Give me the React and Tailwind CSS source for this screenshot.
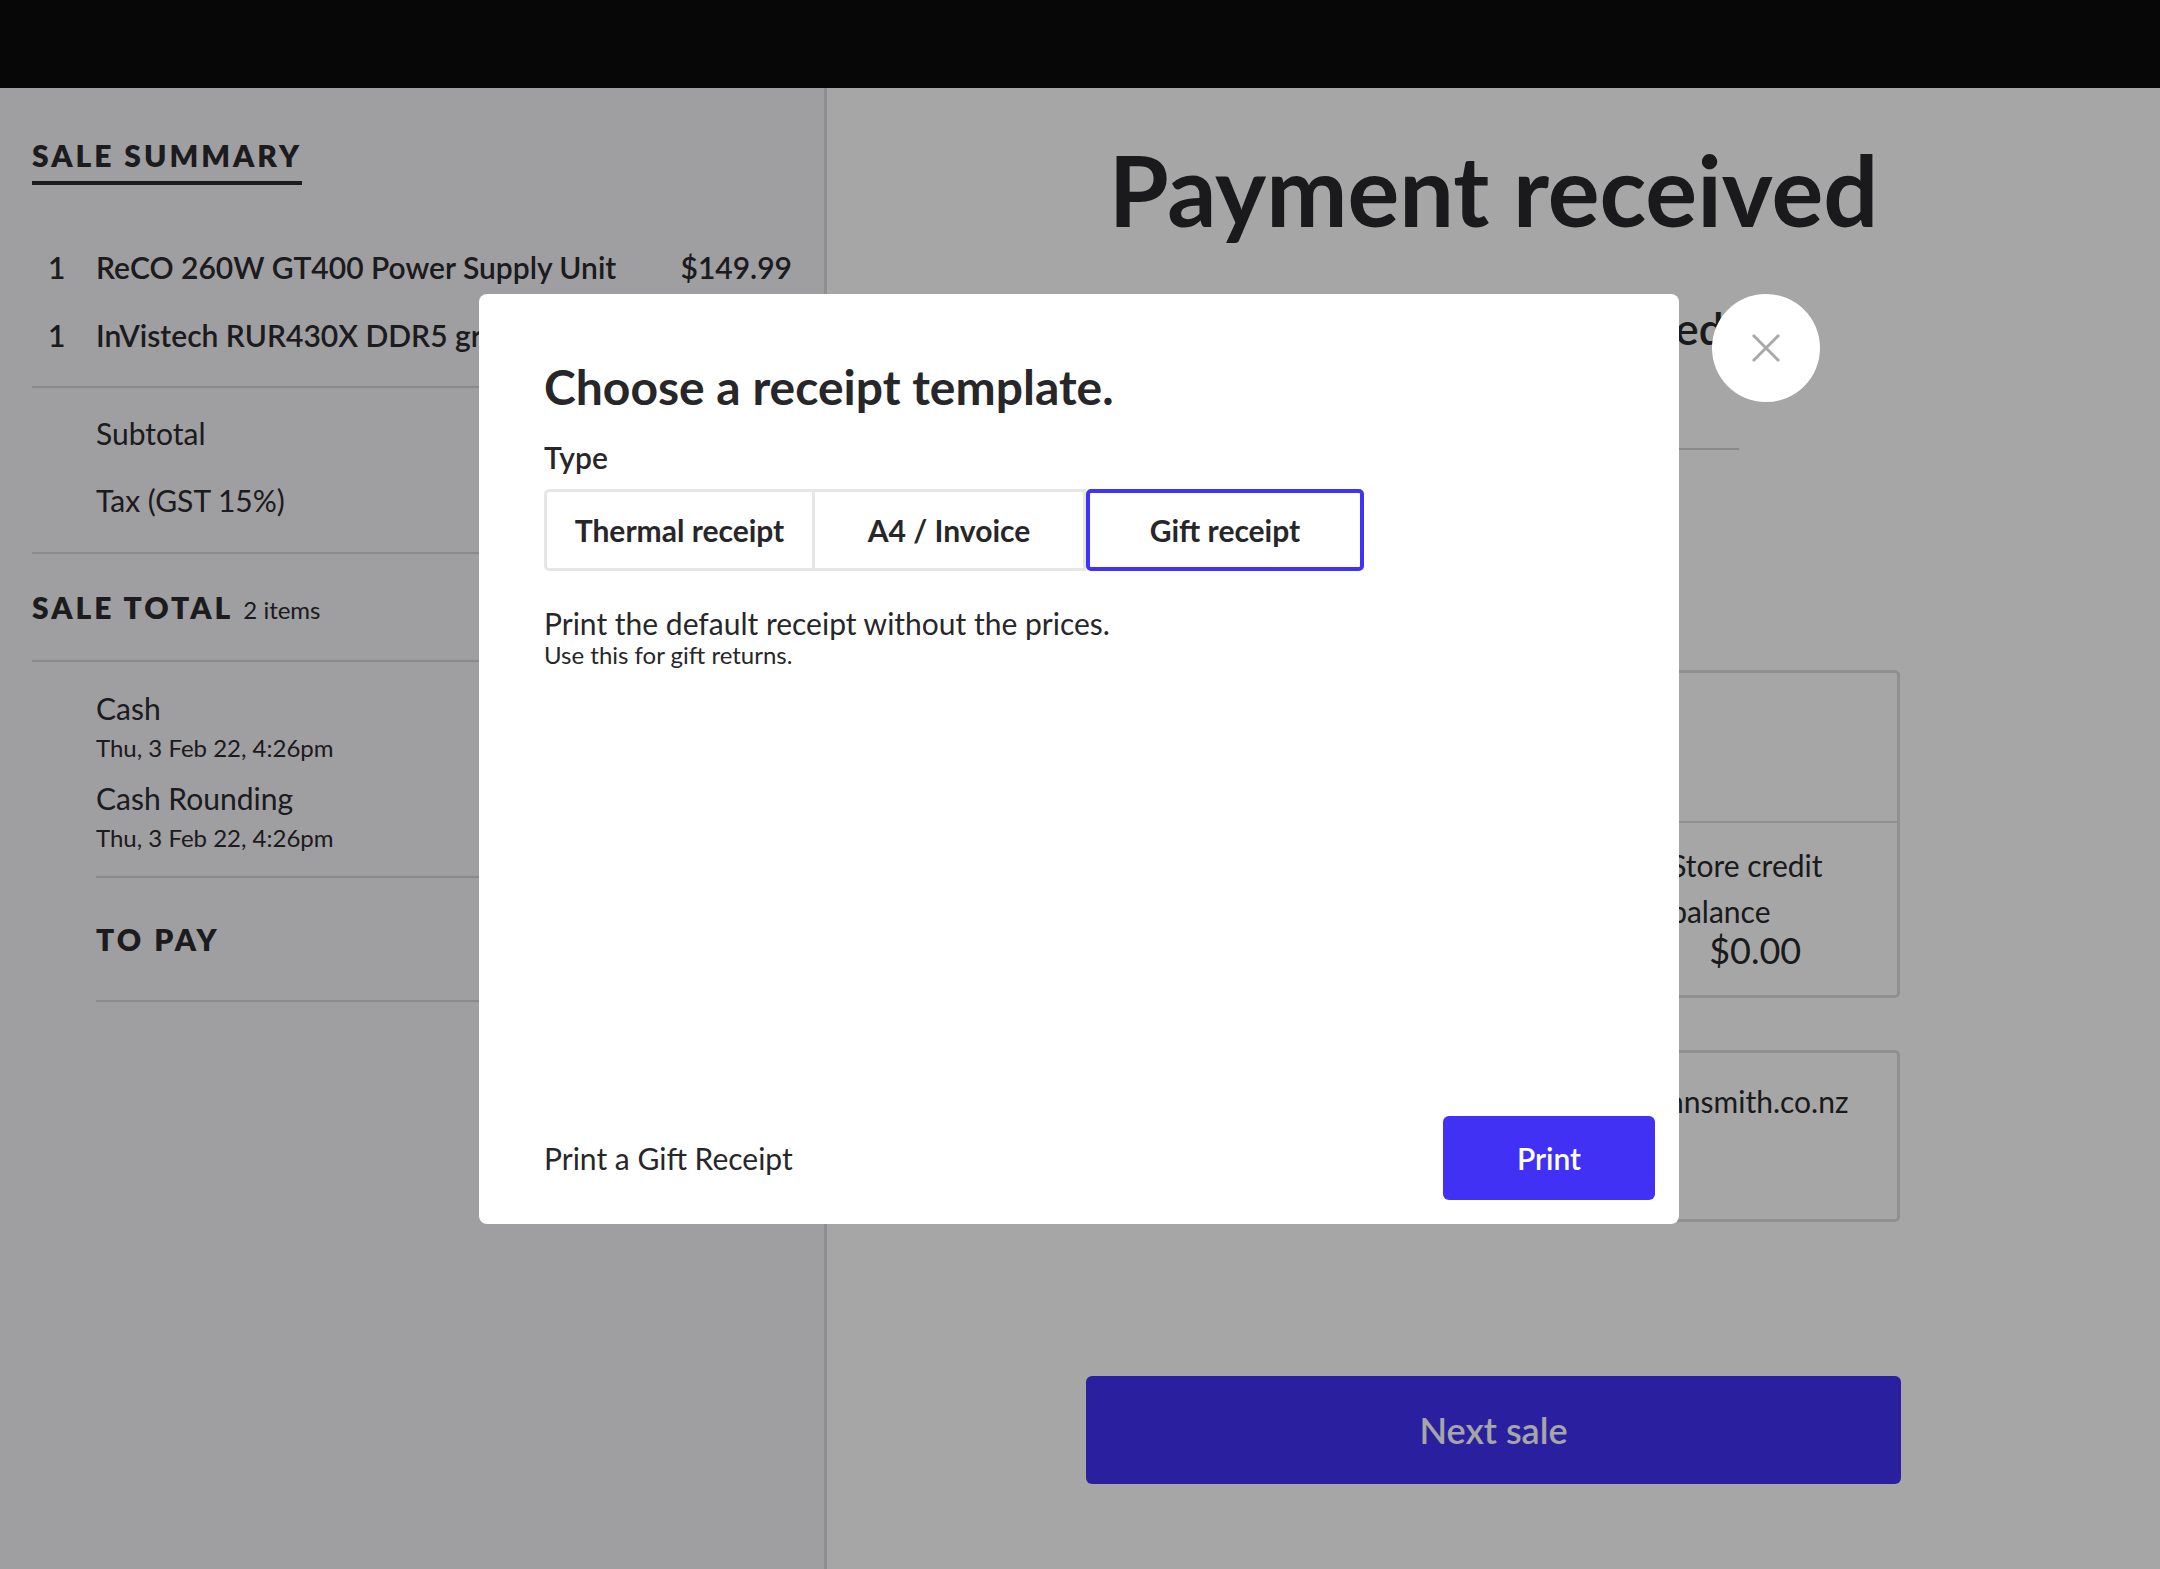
import React from 'react';

// Payment complete screen with the "choose receipt template" dialog open

const saleItems = [
  { qty: 1, name: 'ReCO 260W GT400 Power Supply Unit', price: '$149.99' },
  { qty: 1, name: 'InVistech RUR430X DDR5 graphics', price: '$8.70' },
];

const templates = [
  { id: 'thermal', label: 'Thermal receipt', w: 'w-[271px]' },
  { id: 'a4', label: 'A4 / Invoice', w: 'w-[271px]' },
  { id: 'gift', label: 'Gift receipt', w: 'w-[278px]' },
];

function SaleSummary() {
  return (
    <aside className="w-[827px] shrink-0 border-r-[3px] border-[#dcdbe0] bg-[#f5f3f8] px-8 text-[#2b2a2e]">
      <div className="pt-[49px]">
        <h2 className="inline-block border-b-4 border-[#2b2a2e] pb-[8px] text-[30px] leading-[36px] font-extrabold tracking-[0.1em] uppercase">
          Sale summary
        </h2>
      </div>

      <div className="mt-[48px]">
        {saleItems.map((it) => (
          <div key={it.name} className="flex h-[68px] items-center text-[30px] leading-[36px] font-semibold">
            <div className="w-[64px] shrink-0 pl-[16px]">{it.qty}</div>
            <div className="min-w-0 flex-1 whitespace-nowrap">{it.name}</div>
            <div className="ml-8 shrink-0">{it.price}</div>
          </div>
        ))}
      </div>

      <div className="mt-[17px] h-[2px] bg-[#d4d3d8]" />
      <div className="mt-[12px] pl-[64px] text-[30px]">
        <div className="flex h-[67px] items-center justify-between"><span>Subtotal</span><span>$138.00</span></div>
        <div className="flex h-[67px] items-center justify-between"><span>Tax (GST 15%)</span><span>$20.70</span></div>
      </div>
      <div className="mt-[18px] h-[2px] bg-[#d4d3d8]" />

      <div className="flex h-[106px] items-center justify-between">
        <div className="flex items-baseline gap-[10px]">
          <span className="text-[30px] font-extrabold tracking-[0.1em] uppercase">Sale total</span>
          <span className="text-[24px]">2 items</span>
        </div>
        <span className="text-[30px] font-extrabold">$158.70</span>
      </div>
      <div className="h-[2px] bg-[#d4d3d8]" />

      <div className="pl-[64px]">
        <div className="pt-[29px] pb-[25px]">
          <div className="flex justify-between text-[30px] leading-[34px]"><span>Cash</span><span>$158.70</span></div>
          <div className="mt-[10px] text-[24px] leading-[26px]">Thu, 3 Feb 22, 4:26pm</div>
          <div className="mt-[20px] flex justify-between text-[30px] leading-[34px]"><span>Cash Rounding</span><span>-$0.00</span></div>
          <div className="mt-[10px] text-[24px] leading-[26px]">Thu, 3 Feb 22, 4:26pm</div>
        </div>
        <div className="h-[2px] bg-[#d4d3d8]" />
        <div className="flex h-[122px] items-center justify-between">
          <span className="text-[30px] font-extrabold tracking-[0.1em] uppercase">To pay</span>
          <span className="text-[30px] font-extrabold">$0.00</span>
        </div>
        <div className="h-[2px] bg-[#d4d3d8]" />
      </div>
    </aside>
  );
}

function PaymentPanel() {
  return (
    <main className="flex flex-1 flex-col items-center bg-white text-[#28282b]">
      <h1 className="mt-[43px] text-[97px] leading-[118px] font-bold">Payment received</h1>
      <div className="mt-[53px] text-[44px] leading-[53px] font-semibold">Sale #10482 completed</div>
      <div className="mt-[93px] h-[2px] w-[490px] bg-[#d5d5d5]" />

      <div className="mt-[220px] flex h-[328px] w-[812px] flex-col rounded-[5px] border-[3px] border-[#dedede]">
        <div className="flex h-[148px] items-center px-[40px] text-[30px] font-semibold">John Smith</div>
        <div className="h-[2px] bg-[#dedede]" />
        <div className="grid flex-1 grid-cols-3">
          <div className="flex flex-col items-center pt-[19px] text-[30px] leading-[46px]">
            <span>Loyalty</span>
          </div>
          <div className="flex flex-col items-center pt-[19px] text-[30px] leading-[46px]">
            <span>Account</span>
          </div>
          <div className="flex flex-col items-center pt-[19px] pr-[14px]">
            <div className="w-[170px] text-left text-[30px] leading-[46px]">Store credit balance</div>
            <div className="-mt-[4px] text-[36px] leading-[40px]">$0.00</div>
          </div>
        </div>
      </div>

      <div className="mt-[52px] flex h-[172px] w-[812px] items-start justify-between rounded-[5px] border-[3px] border-[#dedede] pt-[31px] pr-[48px] pl-[40px] text-[30px] leading-[34px]">
        <span>Email</span>
        <span>john@johnsmith.co.nz</span>
      </div>

      <button className="mt-[154px] h-[108px] w-[815px] rounded-[6px] bg-[#4031f5] text-[36px] font-semibold text-white">
        Next sale
      </button>
    </main>
  );
}

function ReceiptDialog() {
  const [selected, setSelected] = React.useState('gift');
  return (
    <>
      <div className="absolute top-[294px] left-[479px] flex h-[930px] w-[1200px] flex-col rounded-lg bg-white text-[#27272a]">
        <div className="px-[65px] pt-[64px]">
          <h3 className="text-[48px] leading-[58px] font-bold">Choose a receipt template.</h3>
          <div className="mt-[24px] text-[30px] leading-[34px] font-semibold">Type</div>
          <div className="mt-[15px] flex">
            {templates.map((t, i) => {
              const on = selected === t.id;
              return (
                <button
                  key={t.id}
                  onClick={() => setSelected(t.id)}
                  className={`${t.w} h-[82px] text-[30px] font-bold ${
                    on
                      ? 'rounded-[5px] border-4 border-[#4033f5]'
                      : `border-[3px] border-[#e6e6e8] ${i === 0 ? 'rounded-l-[5px]' : 'border-l-0'}`
                  }`}
                >
                  {t.label}
                </button>
              );
            })}
          </div>
          <div className="mt-[35px] text-[30px] leading-[34px]">Print the default receipt without the prices.</div>
          <div className="mt-[2px] text-[24px] leading-[26px]">Use this for gift returns.</div>
        </div>
        <div className="flex-1" />
        <div className="flex items-center justify-between pr-[24px] pb-[24px] pl-[65px]">
          <span className="text-[30px]">Print a Gift Receipt</span>
          <button className="h-[84px] w-[212px] rounded-[6px] bg-[#4031f5] text-[30px] font-semibold text-white">Print</button>
        </div>
      </div>

      <button className="absolute top-[294px] left-[1712px] flex h-[108px] w-[108px] items-center justify-center rounded-full bg-white">
        <svg width="30" height="30" viewBox="0 0 30 30" fill="none" stroke="#a9a9a9" strokeWidth="3">
          <path d="M2 2 L28 28 M28 2 L2 28" />
        </svg>
      </button>
    </>
  );
}

export default function App() {
  return (
    <div className="relative h-[1569px] w-[2160px] overflow-hidden font-['Lato','Liberation_Sans',sans-serif]">
      <div className="h-[88px] bg-[#0c0c0c]" />
      <div className="flex h-[1481px]">
        <SaleSummary />
        <PaymentPanel />
      </div>
      <div className="absolute inset-0 bg-black/35" />
      <ReceiptDialog />
    </div>
  );
}
